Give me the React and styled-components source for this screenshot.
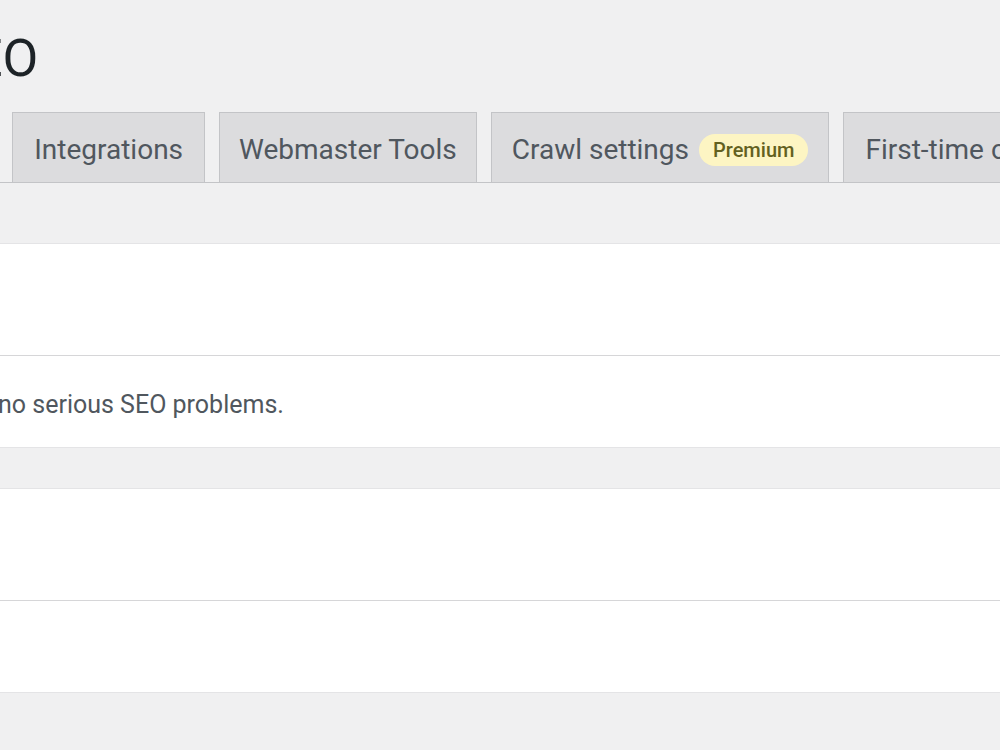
import React from "react";
import styled, { createGlobalStyle } from "styled-components";

const Global = createGlobalStyle`
  html, body { margin: 0; padding: 0; background: #f0f0f1; overflow: hidden; }
  body { font-family: Roboto, "Open Sans", sans-serif; color: #1d2327; }
  * { box-sizing: border-box; }
`;

const Page = styled.div`
  width: 1000px;
  height: 750px;
  overflow: hidden;
  background: #f0f0f1;
`;

const Title = styled.h1`
  margin: 0;
  padding-top: 31px;
  margin-left: -58px;
  font-size: 52px;
  font-weight: 400;
  line-height: 56px;
  color: #1d2327;
  white-space: nowrap;
`;

const TabBar = styled.nav`
  margin-top: 25px;
  height: 71px;
  display: flex;
  align-items: flex-end;
  gap: 14px;
  margin-left: -141px;
  border-bottom: 1px solid #c3c4c7;
  white-space: nowrap;
`;

const Tab = styled.a`
  flex: none;
  height: 70px;
  display: flex;
  align-items: center;
  gap: 10px;
  padding: 4px ${(p) => p.$pad || 21}px 0;
  background: #dcdcde;
  border: 1px solid #c3c4c7;
  border-bottom: none;
  color: #50575e;
  font-size: 28px;
  font-weight: 400;
  text-decoration: none;
`;

const Badge = styled.span`
  display: inline-flex;
  align-items: center;
  height: 32px;
  padding: 0 14px;
  border-radius: 16px;
  background: #fdf5c3;
  color: #63611f;
  font-size: 20px;
  font-weight: 500;
`;

const Panel = styled.section`
  margin-top: ${(p) => p.$top}px;
  background: #fff;
  border-top: 1px solid #e4e4e6;
  border-bottom: 1px solid #e4e4e6;
`;

const PanelHead = styled.div`
  height: 112px;
  border-bottom: 1px solid #d6d6d8;
`;

const PanelBody = styled.div`
  height: 91px;
  display: flex;
  align-items: center;
  padding-top: 6px;
`;

const BodyText = styled.p`
  margin: 0 0 0 -2px;
  font-size: 25px;
  color: #50575e;
  white-space: nowrap;
`;

export default function App() {
  return (
    <Page>
      <Global />
      <Title>SEO</Title>
      <TabBar>
        <Tab>General</Tab>
        <Tab>Integrations</Tab>
        <Tab $pad={19}>Webmaster Tools</Tab>
        <Tab $pad={20}>
          Crawl settings <Badge>Premium</Badge>
        </Tab>
        <Tab>First-time configuration</Tab>
      </TabBar>
      <Panel $top={60}>
        <PanelHead />
        <PanelBody>
          <BodyText>no serious SEO problems.</BodyText>
        </PanelBody>
      </Panel>
      <Panel $top={40}>
        <PanelHead />
        <PanelBody />
      </Panel>
    </Page>
  );
}
